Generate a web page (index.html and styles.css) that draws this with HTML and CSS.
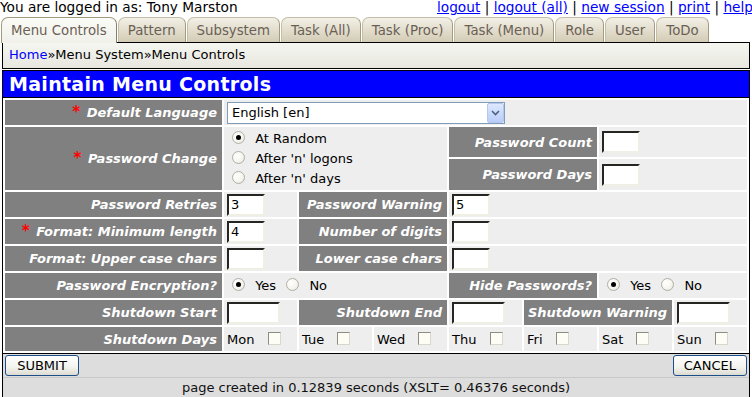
FILE: index.html
```html
<!DOCTYPE html>
<html lang="en">
<head>
  <meta charset="UTF-8" />
  <title>Maintain Menu Controls</title>
  <link rel="stylesheet" href="styles.css">
</head>
<body>

  <div class="topbar">
    <span>You are logged in as: Tony Marston</span>
    <span class="links">
      <a href="#">logout</a> | <a href="#">logout (all)</a> | <a href="#">new session</a> | <a href="#">print</a> | <a href="#">help</a>
    </span>
  </div>

  <div class="tabs">
    <a class="tab active" href="#">Menu Controls</a>
    <a class="tab" href="#">Pattern</a>
    <a class="tab" href="#">Subsystem</a>
    <a class="tab" href="#">Task (All)</a>
    <a class="tab" href="#">Task (Proc)</a>
    <a class="tab" href="#">Task (Menu)</a>
    <a class="tab" href="#">Role</a>
    <a class="tab" href="#">User</a>
    <a class="tab" href="#">ToDo</a>
  </div>

  <div class="crumbs">
    <a href="#">Home</a>&raquo;Menu System&raquo;Menu Controls
  </div>

  <div class="main">
    <h1 class="title">Maintain Menu Controls</h1>

    <form>
      <table class="form-table">
        <colgroup>
          <col class="col-label">
          <col><col><col><col><col><col><col>
        </colgroup>
        <tr class="row">
          <td class="label"><span class="req">*</span> Default Language</td>
          <td class="value" colspan="7">
            <div class="select-box">
              <select>
                <option>English [en]</option>
              </select>
              <span class="select-btn">
                <svg width="9" height="6" viewBox="0 0 9 6"><path d="M1 1 L4.5 4.5 L8 1" fill="none" stroke="#4d6185" stroke-width="1.6"/></svg>
              </span>
            </div>
          </td>
        </tr>
        <tr class="row-tall">
          <td class="label" rowspan="2"><span class="req">*</span> Password Change</td>
          <td class="value" colspan="3" rowspan="2">
            <div class="radio-list">
              <label><input type="radio" name="pwchange" checked> At Random</label>
              <label><input type="radio" name="pwchange"> After 'n' logons</label>
              <label><input type="radio" name="pwchange"> After 'n' days</label>
            </div>
          </td>
          <td class="label" colspan="2">Password Count</td>
          <td class="value" colspan="2"><input class="text" type="text"></td>
        </tr>
        <tr class="row-tall2">
          <td class="label" colspan="2">Password Days</td>
          <td class="value" colspan="2"><input class="text" type="text"></td>
        </tr>
        <tr class="row">
          <td class="label">Password Retries</td>
          <td class="value"><input class="text" type="text" value="3"></td>
          <td class="label" colspan="2">Password Warning</td>
          <td class="value" colspan="4"><input class="text" type="text" value="5"></td>
        </tr>
        <tr class="row">
          <td class="label"><span class="req">*</span> Format: Minimum length</td>
          <td class="value"><input class="text" type="text" value="4"></td>
          <td class="label" colspan="2">Number of digits</td>
          <td class="value" colspan="4"><input class="text" type="text"></td>
        </tr>
        <tr class="row">
          <td class="label">Format: Upper case chars</td>
          <td class="value"><input class="text" type="text"></td>
          <td class="label" colspan="2">Lower case chars</td>
          <td class="value" colspan="4"><input class="text" type="text"></td>
        </tr>
        <tr class="row">
          <td class="label">Password Encryption?</td>
          <td class="value" colspan="3">
            <label class="inline"><input type="radio" name="encrypt" checked> Yes</label>
            <label class="inline"><input type="radio" name="encrypt"> No</label>
          </td>
          <td class="label" colspan="2">Hide Passwords?</td>
          <td class="value" colspan="2">
            <label class="inline"><input type="radio" name="hide" checked> Yes</label>
            <label class="inline"><input type="radio" name="hide"> No</label>
          </td>
        </tr>
        <tr class="row">
          <td class="label">Shutdown Start</td>
          <td class="value"><input class="text wide" type="text"></td>
          <td class="label" colspan="2">Shutdown End</td>
          <td class="value"><input class="text wide" type="text"></td>
          <td class="label" colspan="2">Shutdown Warning</td>
          <td class="value"><input class="text wide" type="text"></td>
        </tr>
        <tr class="row-days">
          <td class="label">Shutdown Days</td>
          <td class="value day">Mon <input type="checkbox"></td>
          <td class="value day">Tue <input type="checkbox"></td>
          <td class="value day">Wed <input type="checkbox"></td>
          <td class="value day">Thu <input type="checkbox"></td>
          <td class="value day">Fri <input type="checkbox"></td>
          <td class="value day">Sat <input type="checkbox"></td>
          <td class="value day">Sun <input type="checkbox"></td>
        </tr>
      </table>

      <div class="actions">
        <button type="submit">SUBMIT</button>
        <button type="button">CANCEL</button>
      </div>
    </form>

    <div class="footer">
      page created in 0.12839 seconds (XSLT= 0.46376 seconds)
    </div>
  </div>

</body>
</html>
```

FILE: styles.css
```css
body {
  font-family: 'DejaVu Sans', Verdana, sans-serif;
  font-size: 13px;
  margin: 0;
  padding: 0;
  background-color: #ffffff;
  color: #000000;
  width: 752px;
  overflow: hidden;
}

a {
  color: #0000ff;
}

.topbar {
  display: flex;
  justify-content: space-between;
  height: 16px;
  line-height: 15px;
  font-size: 13.7px;
  white-space: nowrap;
}

.topbar .links {
  margin-right: -1px;
}

.tabs {
  display: flex;
  gap: 1px;
  padding-left: 1px;
  margin-top: 1px;
  height: 25px;
  position: relative;
  z-index: 1;
}

.tab {
  display: block;
  height: 24px;
  line-height: 25px;
  padding: 0 9px;
  border: 1px solid #c5bea6;
  border-right-color: #a49a80;
  border-bottom: none;
  border-radius: 7px 7px 0 0;
  background: linear-gradient(#f2f0e6, #dcd6c3 70%, #d3ccb6);
  color: #6a5f55;
  font-size: 13.3px;
  text-decoration: none;
  white-space: nowrap;
}

.tab.active {
  height: 25px;
  background: linear-gradient(#fbfbf7, #f1f1ea);
  border-color: #a49a80;
  border-right-color: #8a8068;
}

.crumbs {
  margin: 0 2px;
  border: 1px solid #000000;
  height: 25px;
  line-height: 24px;
  padding-left: 6px;
  background: linear-gradient(#f6f6f1, #e7e7df);
  white-space: nowrap;
}

.crumbs a {
  text-decoration: none;
}

.main {
  margin: 1px 2px 0;
  border: 1px solid #000000;
}

.title {
  margin: 0;
  height: 26px;
  line-height: 26px;
  padding-left: 6px;
  background-color: #0000ff;
  border-bottom: 1px solid #000000;
  color: #ffffff;
  font-size: 19px;
  font-weight: bold;
  letter-spacing: 0.3px;
}

.form-table {
  width: 100%;
  table-layout: fixed;
  border-spacing: 2px;
  font-size: 13px;
  line-height: 15px;
}

.col-label {
  width: 217px;
}

.form-table td {
  padding: 0;
}

.row td {
  height: 25px;
}

.row-tall td {
  height: 30px;
}

.row-tall2 td {
  height: 31px;
}

.row-days td {
  height: 24px;
}

.label {
  background-color: #808080;
  color: #ffffff;
  font-style: italic;
  font-weight: bold;
  text-align: right;
  padding-right: 5px !important;
  white-space: nowrap;
}

.req {
  color: #ff0000;
  font-style: normal;
  font-size: 15px;
  margin-right: 2px;
}

.value {
  background-color: #eeeeee;
  padding-left: 3px !important;
  white-space: nowrap;
}

.text {
  width: 38px;
  height: 22px;
  box-sizing: border-box;
  border: 2px inset #f0efe6;
  border-top-color: #7a7a70;
  border-left-color: #7a7a70;
  padding: 1px 2px;
  font-family: 'DejaVu Sans', Verdana, sans-serif;
  font-size: 13px;
  background-color: #ffffff;
  vertical-align: middle;
}

.text.wide {
  width: 53px;
}

.select-box {
  position: relative;
  width: 278px;
  height: 22px;
}

.select-box select {
  appearance: none;
  width: 100%;
  height: 22px;
  border: 1px solid #7f9db9;
  background-color: #ffffff;
  padding: 0 0 0 4px;
  font-family: 'DejaVu Sans', Verdana, sans-serif;
  font-size: 13px;
  color: #000000;
}

.select-btn {
  position: absolute;
  right: 1px;
  top: 1px;
  width: 17px;
  height: 20px;
  display: flex;
  align-items: center;
  justify-content: center;
  background: linear-gradient(#dde8fe, #b9cdf8);
  border: 1px solid #b4c7f0;
  box-sizing: border-box;
  border-radius: 2px;
}

.radio-list {
  display: flex;
  flex-direction: column;
  gap: 2px;
  padding-left: 5px;
}

.radio-list label {
  height: 18px;
  line-height: 18px;
}

.inline {
  margin-left: 5px;
  margin-right: 1px;
}

input[type="radio"] {
  appearance: none;
  width: 13px;
  height: 13px;
  margin: 0 6px 0 0;
  border: 1px solid #b0b0a8;
  border-radius: 50%;
  background: radial-gradient(circle at 35% 35%, #ffffff, #f6f5ee 55%, #e2e0d6);
  vertical-align: -1px;
  position: relative;
}

input[type="radio"]:checked::after {
  content: "";
  position: absolute;
  left: 3px;
  top: 3px;
  width: 5px;
  height: 5px;
  border-radius: 50%;
  background-color: #000000;
}

input[type="checkbox"] {
  appearance: none;
  width: 13px;
  height: 13px;
  margin: 0 0 0 9px;
  border: 1px solid #8c8c80;
  border-right-color: #d8d7cc;
  border-bottom-color: #d8d7cc;
  background-color: #fdfdf6;
  vertical-align: -1px;
}

.actions {
  display: flex;
  justify-content: space-between;
  border-top: 1px solid #000000;
  background-color: #dddddd;
  height: 24px;
  padding: 1px 2px 0;
  box-sizing: border-box;
}

.actions button {
  height: 21px;
  padding: 0 10px;
  border: 1px solid #1c4f8a;
  border-radius: 3px;
  background: linear-gradient(#ffffff, #f3f3ee 60%, #dcdbd2);
  font-family: 'DejaVu Sans', Verdana, sans-serif;
  font-size: 13px;
  color: #000000;
  min-width: 74px;
}

.footer {
  border-top: 1px solid #c8c8c8;
  background-color: #dddddd;
  height: 20px;
  line-height: 19px;
  text-align: center;
  font-size: 13px;
  color: #111111;
}
```
